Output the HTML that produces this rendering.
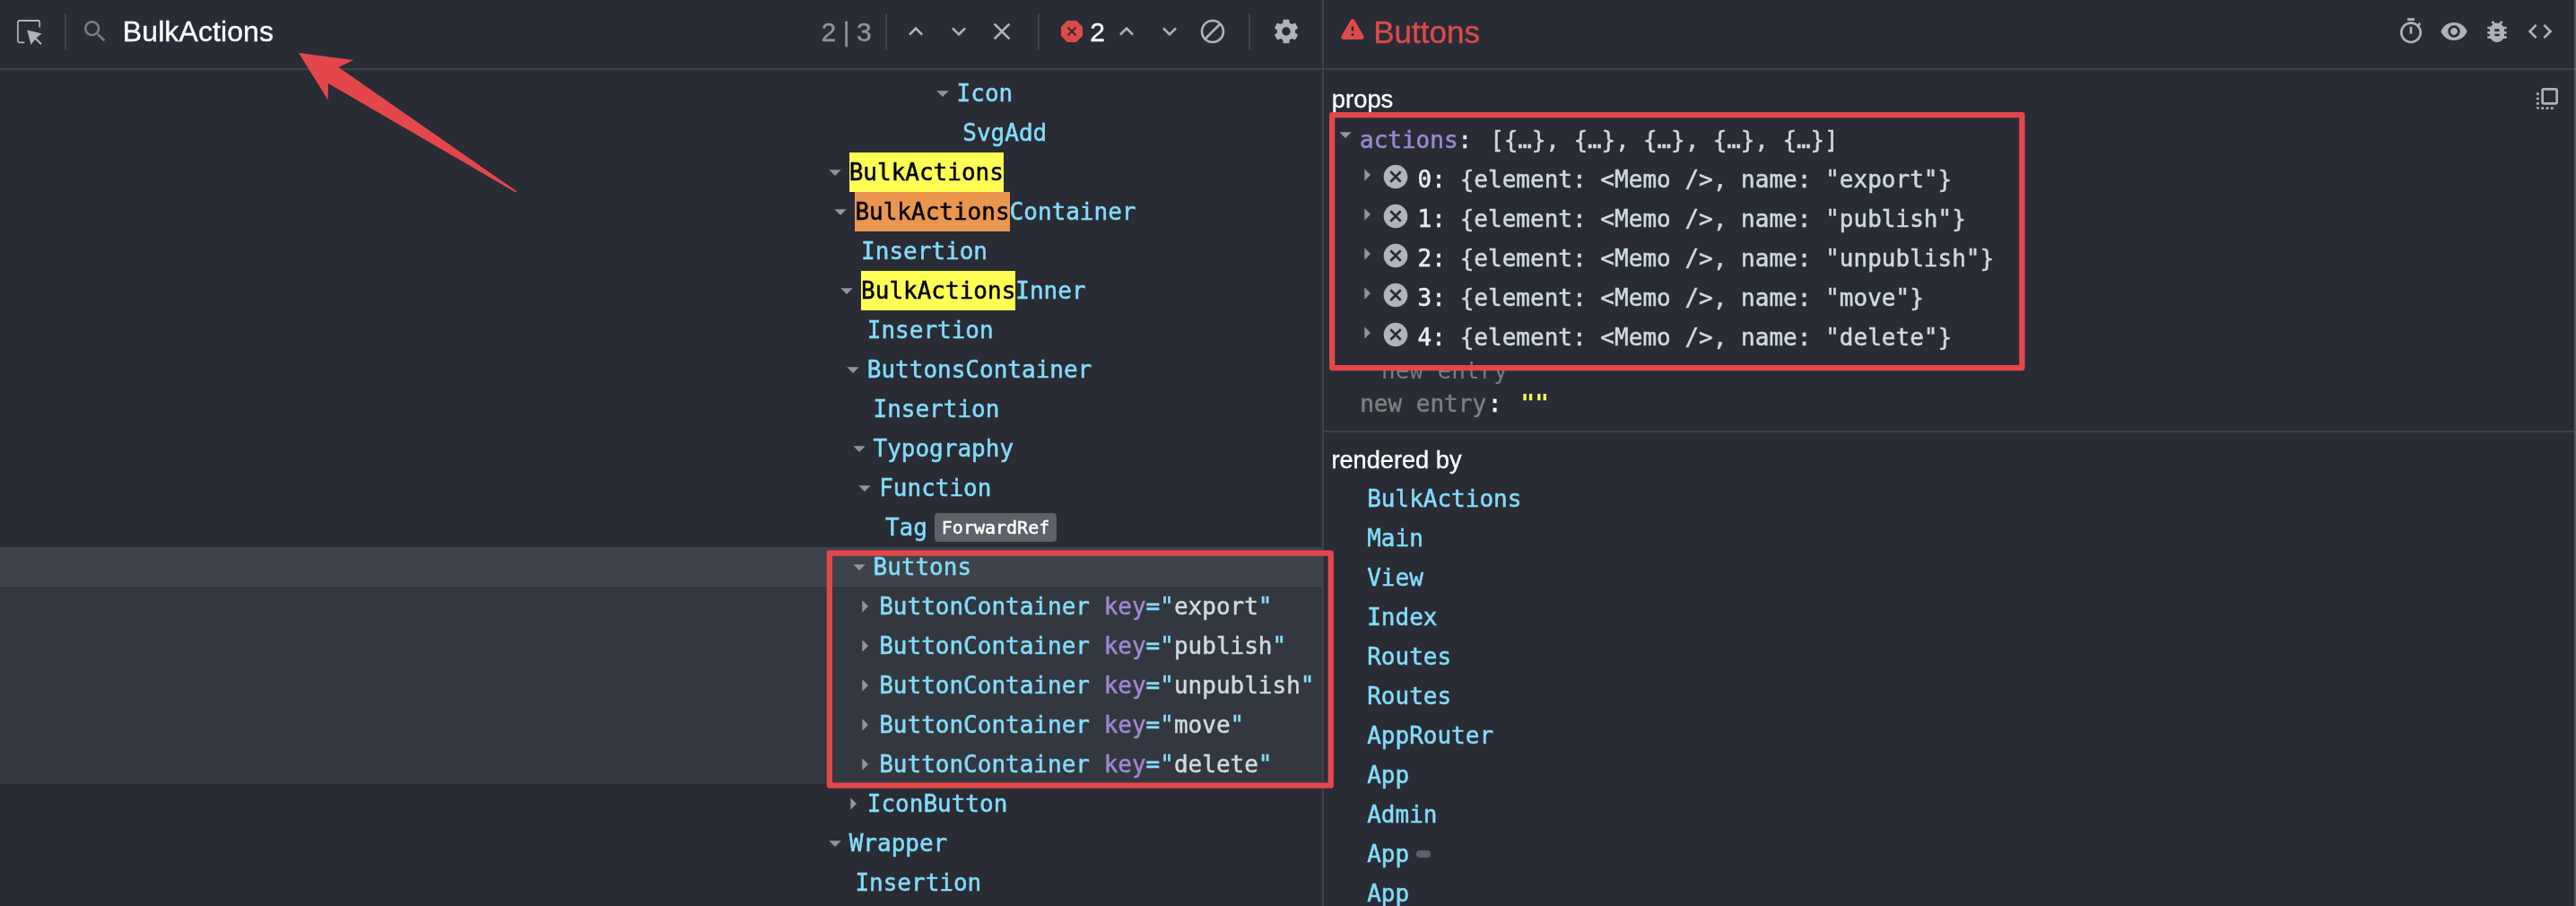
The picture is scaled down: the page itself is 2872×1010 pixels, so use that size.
<!DOCTYPE html>
<html lang="en"><head><meta charset="utf-8"><title>React DevTools</title>
<style>
*{box-sizing:border-box;margin:0;padding:0}
html,body{width:2872px;height:1010px;overflow:hidden;background:#292c35}
body{position:relative;font-family:"Liberation Sans",Arial,sans-serif;color:#fff;-webkit-font-smoothing:antialiased}
#app{position:absolute;left:0;top:0;width:2872px;height:1010px;will-change:transform}
.sans{-webkit-text-stroke:0.35px currentColor}
.abs{position:absolute}
.ic{position:absolute;display:block}
.mono{font-family:"DejaVu Sans Mono","Liberation Mono",monospace;font-size:26px;line-height:44px;white-space:pre;-webkit-text-stroke:0.5px currentColor}
.row{position:absolute;left:0;width:1474px;height:44px}
.row .t{position:absolute;top:0;height:44px;color:#84dcfb}
.hl{background:#ffff54;color:#000;display:inline-block;height:44px}
.hlc{background:#eb964e;color:#000;display:inline-block;height:44px}
.k{color:#9d87d2}
.v{color:#cedae0}
.badge{position:absolute;height:32px;line-height:32px;font-family:"DejaVu Sans Mono",monospace;font-size:20px;background:#5e6167;color:#fff;border-radius:4px;padding:0 8px;white-space:pre}
.vd{position:absolute;width:2px;top:15px;height:40px;background:#3d424a}
.pr{position:absolute;height:44px;color:#cedae0}
.n{color:#ededed}
.own{position:absolute;left:1524.2px;height:44px;color:#84dcfb}
.redbox{position:absolute;border:6px solid #e4474b;border-radius:3px}
</style></head><body><div id="app">

<div class="abs" style="left:0;top:610px;width:1474px;height:44px;background:#3e434b"></div>
<div class="abs" style="left:0;top:654px;width:1474px;height:220px;background:#33373f"></div>
<div class="abs" style="left:0;top:76px;width:2872px;height:2px;background:#3d424a"></div>
<div class="abs" style="left:1474px;top:0;width:2px;height:1010px;background:#3d424a"></div>
<div class="abs" style="left:1476px;top:480px;width:1394px;height:2px;background:#3d424a"></div>
<svg class="ic" style="left:16px;top:19px;width:32px;height:32px" viewBox="0 0 24 24" fill="#afb3b9"><path d="M8.5,22H3.7l-1.4-1.5V3.8l1.3-1.5h17.2l1,1.5v4.9h-1.3V4.3l-0.4-0.6H4.2L3.6,4.3V20l0.7,0.7h4.2V22z M23,13.9l-4.6,3.6l4.6,4.6l-1.1,1.1l-4.7-4.4l-3.3,4.4l-3.2-12.3L23,13.9z"/></svg>
<div class="vd" style="left:72px"></div>
<svg class="ic" style="left:90px;top:19px;width:32px;height:32px" viewBox="0 0 24 24" fill="#777d88"><path d="M15.5 14h-.79l-.28-.27C15.41 12.59 16 11.11 16 9.5 16 5.91 13.09 3 9.5 3S3 5.91 3 9.5 5.91 16 9.5 16c1.61 0 3.09-.59 4.23-1.57l.27.28v.79l5 4.99L20.49 19l-4.99-5zm-6 0C7.01 14 5 11.99 5 9.5S7.01 5 9.5 5 14 7.01 14 9.5 11.99 14 9.5 14z"/></svg>
<div class="abs sans" style="left:136.8px;top:13px;height:44px;line-height:44px;font-size:32px;letter-spacing:0.1px;color:#fff;white-space:pre">BulkActions</div>
<div class="abs sans" style="left:915.6px;top:14.2px;height:44px;line-height:44px;font-size:30px;letter-spacing:-0.45px;color:#8f949d;white-space:pre">2 | 3</div>
<div class="vd" style="left:987px"></div>
<svg class="ic" style="left:1005px;top:19px;width:32px;height:32px" viewBox="0 0 24 24" fill="#afb3b9"><path d="M7.41 15.41L12 10.83l4.59 4.58L18 14l-6-6-6 6z"/></svg>
<svg class="ic" style="left:1053px;top:19px;width:32px;height:32px" viewBox="0 0 24 24" fill="#afb3b9"><path d="M7.41 8.59L12 13.17l4.59-4.58L18 10l-6 6-6-6 1.41-1.41z"/></svg>
<svg class="ic" style="left:1101px;top:19px;width:32px;height:32px" viewBox="0 0 24 24" fill="#afb3b9"><path d="M19 6.41L17.59 5 12 10.59 6.41 5 5 6.41 10.59 12 5 17.59 6.41 19 12 13.41 17.59 19 19 17.59 13.41 12z"/></svg>
<div class="vd" style="left:1157px"></div>
<svg class="ic" style="left:1183px;top:23px;width:24px;height:24px" viewBox="0 0 24 24"><path fill="#de4a4c" d="M16.971 0h-9.942l-7.029 7.029v9.941l7.029 7.03h9.941l7.03-7.029v-9.942z"/><path d="M7.5 7.5l9 9M16.5 7.5l-9 9" stroke="#282c34" stroke-width="1.8" fill="none"/></svg>
<div class="abs sans" style="left:1215.2px;top:14.2px;height:44px;line-height:44px;font-size:30px;color:#fff">2</div>
<svg class="ic" style="left:1240px;top:19px;width:32px;height:32px" viewBox="0 0 24 24" fill="#afb3b9"><path d="M7.41 15.41L12 10.83l4.59 4.58L18 14l-6-6-6 6z"/></svg>
<svg class="ic" style="left:1288px;top:19px;width:32px;height:32px" viewBox="0 0 24 24" fill="#afb3b9"><path d="M7.41 8.59L12 13.17l4.59-4.58L18 10l-6 6-6-6 1.41-1.41z"/></svg>
<svg class="ic" style="left:1336px;top:19px;width:32px;height:32px" viewBox="0 0 24 24" fill="#afb3b9"><path d="M12 2C6.48 2 2 6.48 2 12s4.48 10 10 10 10-4.48 10-10S17.52 2 12 2zM4 12c0-4.42 3.58-8 8-8 1.85 0 3.55.63 4.9 1.69L5.69 16.9C4.63 15.55 4 13.85 4 12zm8 8c-1.85 0-3.55-.63-4.9-1.69L18.31 7.1C19.37 8.45 20 10.15 20 12c0 4.42-3.58 8-8 8z"/></svg>
<div class="vd" style="left:1392px"></div>
<svg class="ic" style="left:1418px;top:19px;width:32px;height:32px" viewBox="0 0 24 24" fill="#afb3b9"><path d="M19.43 12.98c.04-.32.07-.64.07-.98s-.03-.66-.07-.98l2.11-1.65c.19-.15.24-.42.12-.64l-2-3.46c-.12-.22-.39-.3-.61-.22l-2.49 1c-.52-.4-1.08-.73-1.69-.98l-.38-2.65C14.46 2.18 14.25 2 14 2h-4c-.25 0-.46.18-.49.42l-.38 2.65c-.61.25-1.17.59-1.69.98l-2.49-1c-.23-.09-.49 0-.61.22l-2 3.46c-.13.22-.07.49.12.64l2.11 1.65c-.04.32-.07.65-.07.98s.03.66.07.98l-2.11 1.65c-.19.15-.24.42-.12.64l2 3.46c.12.22.39.3.61.22l2.49-1c.52.4 1.08.73 1.69.98l.38 2.65c.03.24.24.42.49.42h4c.25 0 .46-.18.49-.42l.38-2.65c.61-.25 1.17-.59 1.69-.98l2.49 1c.23.09.49 0 .61-.22l2-3.46c.12-.22.07-.49-.12-.64l-2.11-1.65zM12 15.5c-1.93 0-3.5-1.57-3.5-3.5s1.57-3.5 3.5-3.5 3.5 1.57 3.5 3.5-1.57 3.5-3.5 3.5z"/></svg>
<svg class="ic" style="left:1491.6px;top:15.7px;width:32px;height:32px" viewBox="0 0 24 24" fill="#de4a4c"><path d="M4.47 21h15.06c1.54 0 2.5-1.67 1.73-3L13.73 4.99c-.77-1.33-2.69-1.33-3.46 0L2.74 18c-.77 1.33.19 3 1.73 3zM12 14c-.55 0-1-.45-1-1v-2c0-.55.45-1 1-1s1 .45 1 1v2c0 .55-.45 1-1 1zm1 4h-2v-2h2v2z"/></svg>
<div class="abs sans" style="left:1531.2px;top:7.6px;height:56px;line-height:56px;font-size:35px;color:#de4a4c;white-space:pre">Buttons</div>
<svg class="ic" style="left:2671.6px;top:18.5px;width:32px;height:32px" viewBox="0 0 24 24" fill="#afb3b9"><path d="M15 1H9v2h6V1zm-4 13h2V8h-2v6zm8.03-6.61l1.42-1.42c-.43-.51-.9-.99-1.41-1.41l-1.42 1.42C16.07 4.74 14.12 4 12 4c-4.97 0-9 4.03-9 9s4.02 9 9 9 9-4.03 9-9c0-2.12-.74-4.07-1.97-5.61zM12 20c-3.87 0-7-3.13-7-7s3.13-7 7-7 7 3.13 7 7-3.13 7-7 7z"/></svg>
<svg class="ic" style="left:2719.9px;top:19px;width:32px;height:32px" viewBox="0 0 24 24" fill="#afb3b9"><path d="M12 4.5C7 4.5 2.73 7.61 1 12c1.73 4.39 6 7.5 11 7.5s9.27-3.11 11-7.5c-1.73-4.39-6-7.5-11-7.5zM12 17c-2.76 0-5-2.24-5-5s2.24-5 5-5 5 2.24 5 5-2.24 5-5 5zm0-8c-1.66 0-3 1.34-3 3s1.34 3 3 3 3-1.34 3-3-1.34-3-3-3z"/></svg>
<svg class="ic" style="left:2767.6px;top:19px;width:32px;height:32px" viewBox="0 0 24 24" fill="#afb3b9"><path d="M20 8h-2.81c-.45-.78-1.07-1.45-1.82-1.96L17 4.41 15.59 3l-2.17 2.17C12.96 5.06 12.49 5 12 5c-.49 0-.96.06-1.41.17L8.41 3 7 4.41l1.62 1.63C7.88 6.55 7.26 7.22 6.81 8H4v2h2.09c-.05.33-.09.66-.09 1v1H4v2h2v1c0 .34.04.67.09 1H4v2h2.81c1.04 1.79 2.97 3 5.19 3s4.15-1.21 5.19-3H20v-2h-2.09c.05-.33.09-.66.09-1v-1h2v-2h-2v-1c0-.34-.04-.67-.09-1H20V8zm-6 8h-4v-2h4v2zm0-4h-4v-2h4v2z"/></svg>
<svg class="ic" style="left:2815.9px;top:19px;width:32px;height:32px" viewBox="0 0 24 24" fill="#afb3b9"><path d="M9.4 16.6L4.8 12l4.6-4.6L8 6l-6 6 6 6 1.4-1.4zm5.2 0l4.6-4.6-4.6-4.6L16 6l6 6-6 6-1.4-1.4z"/></svg>
<svg class="ic" style="left:2823.8px;top:93.8px;width:32px;height:32px" viewBox="0 0 24 24" fill="#afb3b9"><path d="M3 13h2v-2H3v2zm0 4h2v-2H3v2zm2 4v-2H3a2 2 0 0 0 2 2zM3 9h2V7H3v2zm12 12h2v-2h-2v2zm4-18H9a2 2 0 0 0-2 2v10a2 2 0 0 0 2 2h10c1.1 0 2-.9 2-2V5c0-1.1-.9-2-2-2zm0 12H9V5h10v10zm-8 6h2v-2h-2v2zm-4 0h2v-2H7v2z"/></svg>
<div class="row mono" style="top:81.8px"><svg class="ic" style="left:1034.6px;top:6px;width:32px;height:32px" viewBox="0 0 24 24" fill="#8f949d"><path d="M7 10l5 5 5-5z"/></svg><span class="t" style="left:1066.6px">Icon</span></div>
<div class="row mono" style="top:125.8px"><span class="t" style="left:1073.3px">SvgAdd</span></div>
<div class="row mono" style="top:169.8px"><svg class="ic" style="left:914.7px;top:6px;width:32px;height:32px" viewBox="0 0 24 24" fill="#8f949d"><path d="M7 10l5 5 5-5z"/></svg><span class="t" style="left:946.7px"><span class="hl">BulkActions</span></span></div>
<div class="row mono" style="top:213.8px"><svg class="ic" style="left:921.4px;top:6px;width:32px;height:32px" viewBox="0 0 24 24" fill="#8f949d"><path d="M7 10l5 5 5-5z"/></svg><span class="t" style="left:953.4px"><span class="hlc">BulkActions</span>Container</span></div>
<div class="row mono" style="top:257.8px"><span class="t" style="left:960.1px">Insertion</span></div>
<div class="row mono" style="top:301.8px"><svg class="ic" style="left:928.1px;top:6px;width:32px;height:32px" viewBox="0 0 24 24" fill="#8f949d"><path d="M7 10l5 5 5-5z"/></svg><span class="t" style="left:960.1px"><span class="hl">BulkActions</span>Inner</span></div>
<div class="row mono" style="top:345.8px"><span class="t" style="left:966.8px">Insertion</span></div>
<div class="row mono" style="top:389.8px"><svg class="ic" style="left:934.8px;top:6px;width:32px;height:32px" viewBox="0 0 24 24" fill="#8f949d"><path d="M7 10l5 5 5-5z"/></svg><span class="t" style="left:966.8px">ButtonsContainer</span></div>
<div class="row mono" style="top:433.8px"><span class="t" style="left:973.5px">Insertion</span></div>
<div class="row mono" style="top:477.8px"><svg class="ic" style="left:941.5px;top:6px;width:32px;height:32px" viewBox="0 0 24 24" fill="#8f949d"><path d="M7 10l5 5 5-5z"/></svg><span class="t" style="left:973.5px">Typography</span></div>
<div class="row mono" style="top:521.8px"><svg class="ic" style="left:948.2px;top:6px;width:32px;height:32px" viewBox="0 0 24 24" fill="#8f949d"><path d="M7 10l5 5 5-5z"/></svg><span class="t" style="left:980.2px">Function</span></div>
<div class="row mono" style="top:565.8px"><span class="t" style="left:986.9px">Tag</span><span class="badge" style="left:1041.8px;top:6px">ForwardRef</span></div>
<div class="row mono" style="top:609.8px"><svg class="ic" style="left:941.5px;top:6px;width:32px;height:32px" viewBox="0 0 24 24" fill="#8f949d"><path d="M7 10l5 5 5-5z"/></svg><span class="t" style="left:973.5px">Buttons</span></div>
<div class="row mono" style="top:653.8px"><svg class="ic" style="left:948.2px;top:6px;width:32px;height:32px" viewBox="0 0 24 24" fill="#8f949d"><path d="M10 17l5-5-5-5v10z"/></svg><span class="t" style="left:980.2px">ButtonContainer <span class="k">key</span>="<span class="v">export</span>"</span></div>
<div class="row mono" style="top:697.8px"><svg class="ic" style="left:948.2px;top:6px;width:32px;height:32px" viewBox="0 0 24 24" fill="#8f949d"><path d="M10 17l5-5-5-5v10z"/></svg><span class="t" style="left:980.2px">ButtonContainer <span class="k">key</span>="<span class="v">publish</span>"</span></div>
<div class="row mono" style="top:741.8px"><svg class="ic" style="left:948.2px;top:6px;width:32px;height:32px" viewBox="0 0 24 24" fill="#8f949d"><path d="M10 17l5-5-5-5v10z"/></svg><span class="t" style="left:980.2px">ButtonContainer <span class="k">key</span>="<span class="v">unpublish</span>"</span></div>
<div class="row mono" style="top:785.8px"><svg class="ic" style="left:948.2px;top:6px;width:32px;height:32px" viewBox="0 0 24 24" fill="#8f949d"><path d="M10 17l5-5-5-5v10z"/></svg><span class="t" style="left:980.2px">ButtonContainer <span class="k">key</span>="<span class="v">move</span>"</span></div>
<div class="row mono" style="top:829.8px"><svg class="ic" style="left:948.2px;top:6px;width:32px;height:32px" viewBox="0 0 24 24" fill="#8f949d"><path d="M10 17l5-5-5-5v10z"/></svg><span class="t" style="left:980.2px">ButtonContainer <span class="k">key</span>="<span class="v">delete</span>"</span></div>
<div class="row mono" style="top:873.8px"><svg class="ic" style="left:934.8px;top:6px;width:32px;height:32px" viewBox="0 0 24 24" fill="#8f949d"><path d="M10 17l5-5-5-5v10z"/></svg><span class="t" style="left:966.8px">IconButton</span></div>
<div class="row mono" style="top:917.8px"><svg class="ic" style="left:914.7px;top:6px;width:32px;height:32px" viewBox="0 0 24 24" fill="#8f949d"><path d="M7 10l5 5 5-5z"/></svg><span class="t" style="left:946.7px">Wrapper</span></div>
<div class="row mono" style="top:961.8px"><span class="t" style="left:953.4px">Insertion</span></div>
<div class="abs sans" style="left:1484.8px;top:91px;height:40px;line-height:40px;font-size:27.4px;color:#fff;white-space:pre">props</div>
<svg class="ic" style="left:1484px;top:133.7px;width:32px;height:32px" viewBox="0 0 24 24" fill="#8f949d"><path d="M7 10l5 5 5-5z"/></svg>
<div class="pr mono" style="left:1516px;top:133.7px"><span class="k">actions</span><span class="n">:</span> <span style="margin-left:4.3px;letter-spacing:-0.12px">[{…}, {…}, {…}, {…}, {…}]</span></div>
<svg class="ic" style="left:1507.7px;top:179.4px;width:32px;height:32px" viewBox="0 0 24 24" fill="#8f949d"><path d="M10 17l5-5-5-5v10z"/></svg>
<svg class="ic" style="left:1540px;top:181.0px;width:32px;height:32px" viewBox="0 0 24 24" fill="#b1b4ba"><path d="M12 2C6.47 2 2 6.47 2 12s4.47 10 10 10 10-4.47 10-10S17.53 2 12 2zm5 13.59L15.59 17 12 13.41 8.41 17 7 15.59 10.59 12 7 8.41 8.41 7 12 10.59 15.59 7 17 8.41 13.41 12 17 15.59z"/></svg>
<div class="pr mono" style="left:1580.6px;top:177.7px;letter-spacing:0.02px"><span class="n">0:</span> {element: &lt;Memo /&gt;, name: "export"}</div>
<svg class="ic" style="left:1507.7px;top:223.4px;width:32px;height:32px" viewBox="0 0 24 24" fill="#8f949d"><path d="M10 17l5-5-5-5v10z"/></svg>
<svg class="ic" style="left:1540px;top:225.0px;width:32px;height:32px" viewBox="0 0 24 24" fill="#b1b4ba"><path d="M12 2C6.47 2 2 6.47 2 12s4.47 10 10 10 10-4.47 10-10S17.53 2 12 2zm5 13.59L15.59 17 12 13.41 8.41 17 7 15.59 10.59 12 7 8.41 8.41 7 12 10.59 15.59 7 17 8.41 13.41 12 17 15.59z"/></svg>
<div class="pr mono" style="left:1580.6px;top:221.7px;letter-spacing:0.02px"><span class="n">1:</span> {element: &lt;Memo /&gt;, name: "publish"}</div>
<svg class="ic" style="left:1507.7px;top:267.4px;width:32px;height:32px" viewBox="0 0 24 24" fill="#8f949d"><path d="M10 17l5-5-5-5v10z"/></svg>
<svg class="ic" style="left:1540px;top:269.0px;width:32px;height:32px" viewBox="0 0 24 24" fill="#b1b4ba"><path d="M12 2C6.47 2 2 6.47 2 12s4.47 10 10 10 10-4.47 10-10S17.53 2 12 2zm5 13.59L15.59 17 12 13.41 8.41 17 7 15.59 10.59 12 7 8.41 8.41 7 12 10.59 15.59 7 17 8.41 13.41 12 17 15.59z"/></svg>
<div class="pr mono" style="left:1580.6px;top:265.7px;letter-spacing:0.02px"><span class="n">2:</span> {element: &lt;Memo /&gt;, name: "unpublish"}</div>
<svg class="ic" style="left:1507.7px;top:311.4px;width:32px;height:32px" viewBox="0 0 24 24" fill="#8f949d"><path d="M10 17l5-5-5-5v10z"/></svg>
<svg class="ic" style="left:1540px;top:313.0px;width:32px;height:32px" viewBox="0 0 24 24" fill="#b1b4ba"><path d="M12 2C6.47 2 2 6.47 2 12s4.47 10 10 10 10-4.47 10-10S17.53 2 12 2zm5 13.59L15.59 17 12 13.41 8.41 17 7 15.59 10.59 12 7 8.41 8.41 7 12 10.59 15.59 7 17 8.41 13.41 12 17 15.59z"/></svg>
<div class="pr mono" style="left:1580.6px;top:309.7px;letter-spacing:0.02px"><span class="n">3:</span> {element: &lt;Memo /&gt;, name: "move"}</div>
<svg class="ic" style="left:1507.7px;top:355.4px;width:32px;height:32px" viewBox="0 0 24 24" fill="#8f949d"><path d="M10 17l5-5-5-5v10z"/></svg>
<svg class="ic" style="left:1540px;top:357.0px;width:32px;height:32px" viewBox="0 0 24 24" fill="#b1b4ba"><path d="M12 2C6.47 2 2 6.47 2 12s4.47 10 10 10 10-4.47 10-10S17.53 2 12 2zm5 13.59L15.59 17 12 13.41 8.41 17 7 15.59 10.59 12 7 8.41 8.41 7 12 10.59 15.59 7 17 8.41 13.41 12 17 15.59z"/></svg>
<div class="pr mono" style="left:1580.6px;top:353.7px;letter-spacing:0.02px"><span class="n">4:</span> {element: &lt;Memo /&gt;, name: "delete"}</div>
<div class="pr mono" style="left:1540px;top:390.7px;color:#7b7b7c;-webkit-text-stroke:0">new entry</div>
<div class="pr mono" style="left:1516.2px;top:427.5px;color:#7f7f80">new entry<span class="n" style="color:#fff;margin-left:1.6px">:</span><span style="color:#ffff54;margin-left:21.2px;font-weight:bold;-webkit-text-stroke:0">""</span></div>
<div class="abs sans" style="left:1484.4px;top:493px;height:40px;line-height:40px;font-size:27.2px;color:#fff;white-space:pre">rendered by</div>
<div class="own mono" style="top:534px">BulkActions</div>
<div class="own mono" style="top:578px">Main</div>
<div class="own mono" style="top:622px">View</div>
<div class="own mono" style="top:666px">Index</div>
<div class="own mono" style="top:710px">Routes</div>
<div class="own mono" style="top:754px">Routes</div>
<div class="own mono" style="top:798px">AppRouter</div>
<div class="own mono" style="top:842px">App</div>
<div class="own mono" style="top:886px">Admin</div>
<div class="own mono" style="top:930px">App<span class="abs" style="left:55px;top:18px;width:16px;height:8px;border-radius:4px;background:#5e6167"></span></div>
<div class="own mono" style="top:974px">App</div>
<svg class="ic" style="left:0;top:0;width:2872px;height:1010px" viewBox="0 0 2872 1010"><rect x="924.85" y="616.55" width="558.90" height="259.10" fill="none" stroke="#e4474b" stroke-width="6.3" stroke-linejoin="round"/><rect x="1485.15" y="128.05" width="769.20" height="282.00" fill="none" stroke="#e4474b" stroke-width="6.3" stroke-linejoin="round"/></svg>
<svg class="ic" style="left:0;top:0;width:700px;height:260px" viewBox="0 0 700 260"><polygon fill="#e4474b" points="333.1,59.1 394,67 377.4,75.1 575.9,213.1 574.9,214.4 366,92.9 365.6,111.4"/></svg>
<div class="abs" style="left:2870px;top:0;width:2px;height:1010px;background:rgba(255,255,255,0.2)"></div>
</div></body></html>
